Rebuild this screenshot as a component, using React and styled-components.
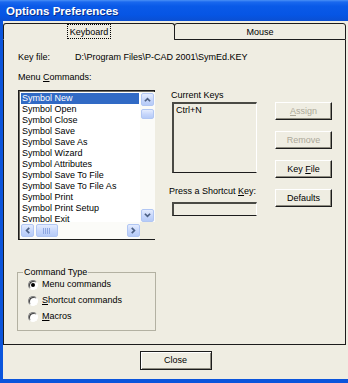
import styled, { createGlobalStyle } from 'styled-components';

const colors = {
  face: '#efede2',
  frame: '#0b55dc',
  dark: '#1c1c1c',
  shadow: '#8e8c80',
  disabled: '#aca899',
  select: '#316ac5',
  group: '#b3b1a2',
  arrow: '#4d6185',
};

const GlobalStyle = createGlobalStyle`
  html, body {
    margin: 0;
    padding: 0;
  }
  body {
    font-family: "Liberation Sans", Arial, sans-serif;
    font-size: 9px;
    color: #000;
  }
`;

const Window = styled.div`
  width: 348px;
  height: 383px;
  display: flex;
  flex-direction: column;
  background: ${colors.frame};
  overflow: hidden;
`;

const TitleBar = styled.div`
  height: 21px;
  flex: none;
  display: flex;
  align-items: center;
  padding-left: 6px;
  background: linear-gradient(180deg, #4a90f5 0px, #1a68ee 2px, #0a5ae8 6px, #0655e4 15px, #0a4fd2 21px);
  color: #fff;
  font: bold 11.5px "Liberation Sans", Arial, sans-serif;
  text-shadow: 1px 1px #0a2f8a;
`;

const Client = styled.div`
  flex: 1;
  margin: 0 0 4px 3px;
  padding-top: 2px;
  background: ${colors.face};
  display: flex;
  flex-direction: column;
`;

const TabStrip = styled.div`
  display: flex;
  height: 17px;
  margin-right: 2px;
`;

const Tab = styled.div`
  box-sizing: border-box;
  width: ${p => (p.$width ? `${p.$width}px` : 'auto')};
  flex: ${p => (p.$width ? 'none' : 1)};
  border: 1px solid ${colors.dark};
  border-bottom-color: ${p => (p.$active ? colors.face : colors.dark)};
  border-radius: 3px 3px 0 0;
  display: flex;
  align-items: center;
  justify-content: center;
  line-height: 12px;
  & + & {
    margin-left: -1px;
  }
`;

const FocusLabel = styled.span`
  outline: 1px dotted #000;
  padding: 1px 2px 0;
`;

const TabPage = styled.div`
  box-sizing: border-box;
  height: 305px;
  flex: none;
  margin-right: 2px;
  border: 1px solid ${colors.dark};
  border-top: none;
  padding: 12px 0 0 14px;
  display: flex;
  flex-direction: column;
`;

const KeyRow = styled.div`
  display: flex;
  line-height: 11px;
`;

const KeyLabel = styled.span`
  width: 57px;
`;

const Label = styled.div`
  line-height: 11px;
  margin-top: ${p => p.$top || 0}px;
  margin-left: ${p => p.$left || 0}px;
  white-space: nowrap;
`;

const U = styled.span`
  text-decoration: underline;
`;

const Main = styled.div`
  display: flex;
  align-items: flex-start;
  margin-top: 7px;
`;

const ListBox = styled.div`
  box-sizing: border-box;
  width: 137px;
  height: 150px;
  border: 1px solid ${colors.dark};
  box-shadow: inset 1px 1px #6f6d64;
  padding: 1px 0 0 1px;
  display: grid;
  grid-template-columns: 120px 15px;
  grid-template-rows: 130px 17px;
  background: #fff;
`;

const Items = styled.div`
  overflow: hidden;
  padding: 1px 1px 0 1px;
`;

const Item = styled.div`
  height: 11px;
  line-height: 11px;
  padding-left: 1px;
  white-space: nowrap;
  background: ${p => (p.$selected ? colors.select : 'transparent')};
  color: ${p => (p.$selected ? '#fff' : '#000')};
`;

const VScroll = styled.div`
  display: flex;
  flex-direction: column;
  align-items: center;
  padding-top: 1px;
  background: #fbfbf8;
`;

const HScroll = styled.div`
  display: flex;
  align-items: center;
  padding-left: 1px;
  background: #fbfbf8;
`;

const Corner = styled.div`
  background: ${colors.face};
`;

const ScrollButton = styled.div`
  box-sizing: border-box;
  width: ${p => p.$w || 13}px;
  height: ${p => p.$h || 13}px;
  flex: none;
  border: 1px solid #b1c6f3;
  border-radius: 2px;
  background: linear-gradient(180deg, #e4ecfe 0%, #c6d6fb 55%, #b6cbf7 100%);
  display: flex;
  align-items: center;
  justify-content: center;
`;

const Spacer = styled.div`
  flex: 1;
`;

const Grip = styled.span`
  width: 8px;
  height: 6px;
  background: repeating-linear-gradient(90deg, #8da6e0 0 1px, transparent 1px 2px);
`;

const ArrowSvg = styled.svg`
  transform: rotate(${p => p.$rot}deg);
`;

const Arrow = ({ rot }) => (
  <ArrowSvg $rot={rot} width="7" height="7" viewBox="0 0 8 8">
    <path d="M1 6 L4 3 L7 6" fill="none" stroke={colors.arrow} strokeWidth="2" />
  </ArrowSvg>
);

const KeysColumn = styled.div`
  width: 86px;
  margin-left: 16px;
  display: flex;
  flex-direction: column;
`;

const SunkenBox = styled.div`
  box-sizing: border-box;
  height: ${p => p.$h}px;
  margin: ${p => p.$top || 0}px 0 0 1px;
  border-style: solid;
  border-width: 2px 1px 1px 2px;
  border-color: #4a4a44 #fff ${colors.dark} #4a4a44;
  padding: 1px 2px;
  line-height: 11px;
`;

const ButtonColumn = styled.div`
  display: flex;
  flex-direction: column;
  gap: 11px;
  margin: 12px 0 0 18px;
`;

const Button = styled.div`
  box-sizing: border-box;
  width: ${p => p.$w || 57}px;
  height: ${p => p.$h || 18}px;
  border: 1px solid;
  border-color: ${p => (p.$default ? colors.dark : `#fff ${colors.dark} ${colors.dark} #fff`)};
  box-shadow: ${p => (p.$default ? 'inset 1px 1px #fff, inset -1px -1px #8e8c80' : 'inset -1px -1px #8e8c80')};
  color: ${p => (p.$disabled ? colors.disabled : '#000')};
  display: flex;
  align-items: center;
  justify-content: center;
  line-height: 11px;
`;

const Group = styled.fieldset`
  box-sizing: border-box;
  width: 139px;
  height: 64px;
  margin: 27px 0 0 -1px;
  padding: 0 0 0 10px;
  border: 1px solid ${colors.group};
  display: flex;
  flex-direction: column;
  gap: 5px;
`;

const Legend = styled.legend`
  margin-left: -5px;
  padding: 0 1px;
  line-height: 11px;
`;

const RadioRow = styled.div`
  display: flex;
  align-items: center;
  height: 11px;
  line-height: 11px;
  margin-top: ${p => p.$top || 0}px;
`;

const RadioCircle = styled.span`
  box-sizing: border-box;
  width: 10px;
  height: 10px;
  margin-right: 4px;
  border-radius: 50%;
  border: 1px solid;
  border-color: #808080 #fff #fff #808080;
  box-shadow: inset 1px 1px #404040;
  background: #fff;
  display: flex;
  align-items: center;
  justify-content: center;
  &::after {
    content: '';
    width: 4px;
    height: 4px;
    border-radius: 50%;
    background: ${p => (p.$checked ? '#000' : 'transparent')};
  }
`;

const Footer = styled.div`
  flex: 1;
  display: flex;
  justify-content: center;
  padding-top: 6px;
`;

const commands = [
  'Symbol New',
  'Symbol Open',
  'Symbol Close',
  'Symbol Save',
  'Symbol Save As',
  'Symbol Wizard',
  'Symbol Attributes',
  'Symbol Save To File',
  'Symbol Save To File As',
  'Symbol Print',
  'Symbol Print Setup',
  'Symbol Exit',
];

const Radio = ({ checked, top, children }) => (
  <RadioRow $top={top}>
    <RadioCircle $checked={checked} />
    {children}
  </RadioRow>
);

const App = () => {
  return (
    <Window>
      <GlobalStyle />
      <TitleBar>Options Preferences</TitleBar>
      <Client>
        <TabStrip>
          <Tab $active $width={172}>
            <FocusLabel>Keyboard</FocusLabel>
          </Tab>
          <Tab>Mouse</Tab>
        </TabStrip>
        <TabPage>
          <KeyRow>
            <KeyLabel>Key file:</KeyLabel>
            <span>D:\Program Files\P-CAD 2001\SymEd.KEY</span>
          </KeyRow>
          <Label $top={9}>
            Menu <U>C</U>ommands:
          </Label>
          <Main>
            <ListBox>
              <Items>
                {commands.map((c, i) => (
                  <Item key={c} $selected={i === 0}>{c}</Item>
                ))}
              </Items>
              <VScroll>
                <ScrollButton><Arrow rot={0} /></ScrollButton>
                <ScrollButton $h={10} style={{ marginTop: 3 }} />
                <Spacer />
                <ScrollButton><Arrow rot={180} /></ScrollButton>
              </VScroll>
              <HScroll>
                <ScrollButton><Arrow rot={-90} /></ScrollButton>
                <ScrollButton $w={22} style={{ marginLeft: 2 }}><Grip /></ScrollButton>
                <Spacer />
                <ScrollButton><Arrow rot={90} /></ScrollButton>
              </HScroll>
              <Corner />
            </ListBox>
            <KeysColumn>
              <Label>Current Keys</Label>
              <SunkenBox $h={71} $top={1}>Ctrl+N</SunkenBox>
              <Label $top={13} $left={-2}>
                Press a Shortcut <U>K</U>ey:
              </Label>
              <SunkenBox $h={14} $top={5} />
            </KeysColumn>
            <ButtonColumn>
              <Button $disabled><span><U>A</U>ssign</span></Button>
              <Button $disabled>Remove</Button>
              <Button><span>Key <U>F</U>ile</span></Button>
              <Button>Defaults</Button>
            </ButtonColumn>
          </Main>
          <Group>
            <Legend>Command Type</Legend>
            <Radio checked top={1}>Menu commands</Radio>
            <Radio><span><U>S</U>hortcut commands</span></Radio>
            <Radio><span><U>M</U>acros</span></Radio>
          </Group>
        </TabPage>
        <Footer>
          <Button $default $w={72} $h={19}>Close</Button>
        </Footer>
      </Client>
    </Window>
  );
};

export default App;
